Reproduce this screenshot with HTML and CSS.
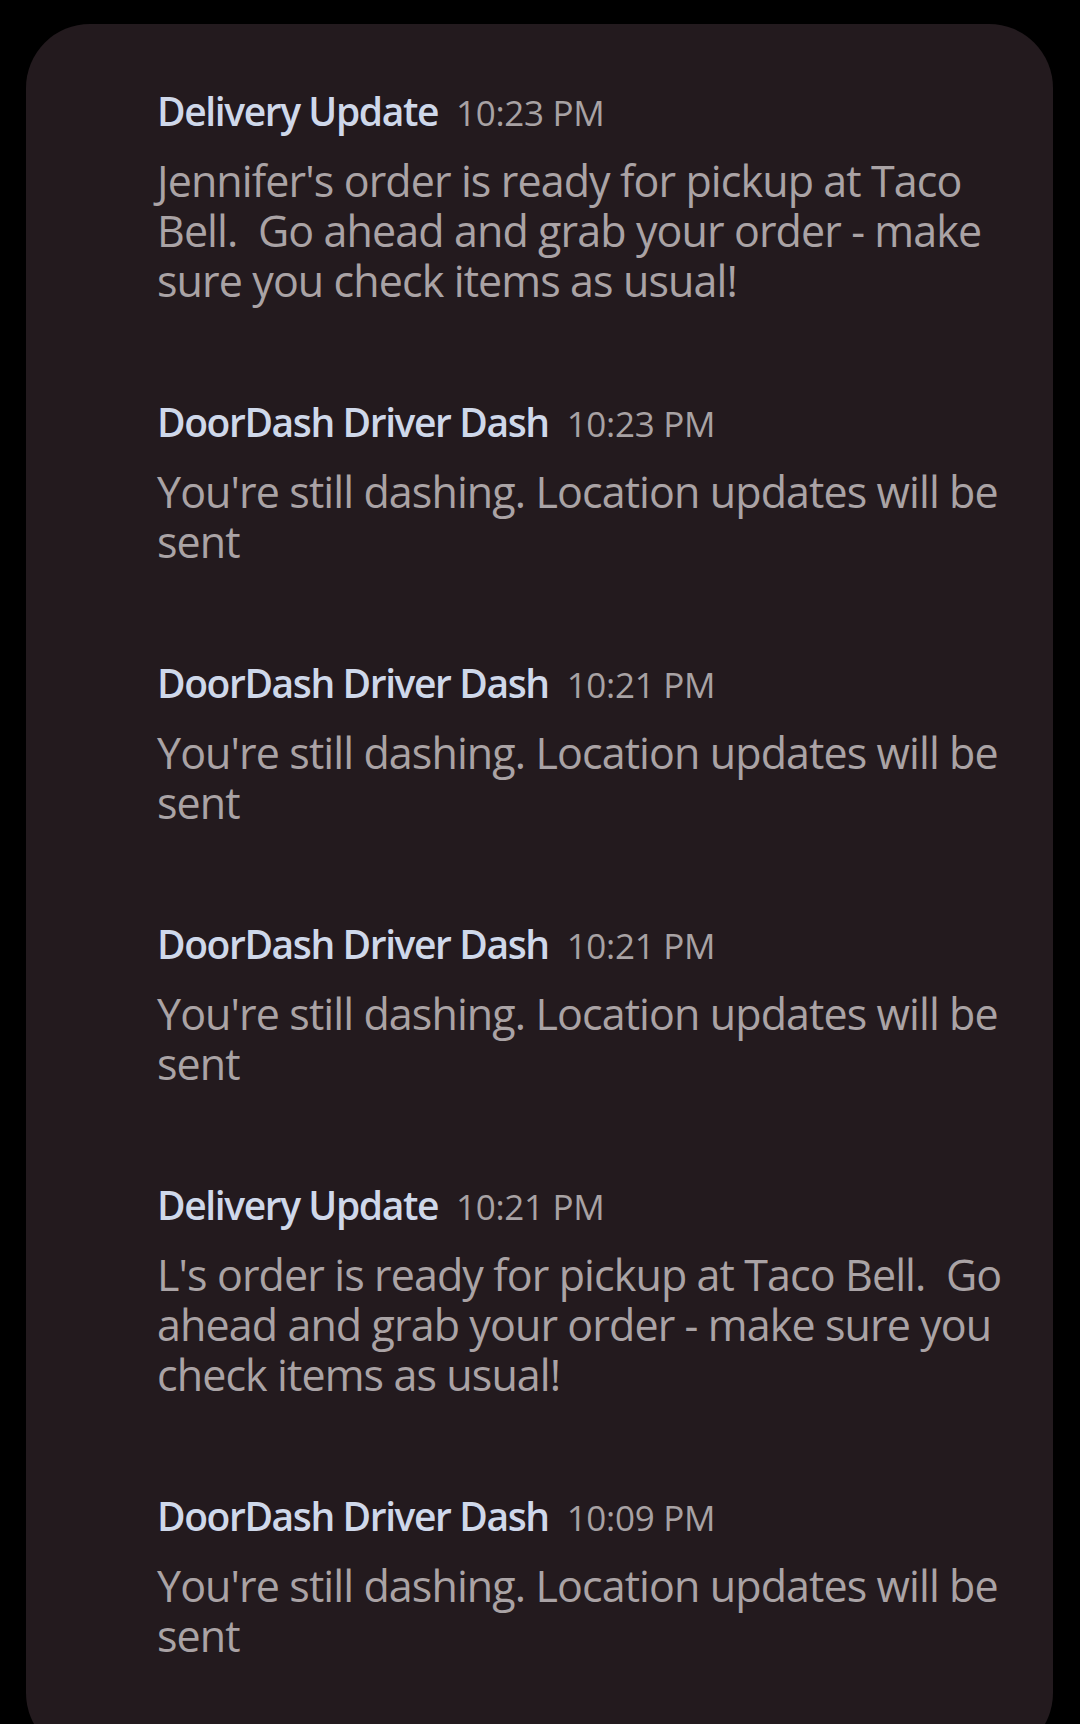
FILE: index.html
```html
<!DOCTYPE html>
<html lang="en">
<head>
<meta charset="utf-8">
<title>Notifications</title>
<link rel="stylesheet" href="styles.css">
</head>
<body>
<div class="panel">
  <div class="item">
    <div class="head"><span class="app">Delivery Update</span><span class="time">10:23 PM</span></div>
    <div class="msg">Jennifer's order is ready for pickup at Taco<br>Bell.&nbsp; Go ahead and grab your order - make<br>sure you check items as usual!</div>
  </div>
  <div class="item">
    <div class="head"><span class="app">DoorDash Driver Dash</span><span class="time">10:23 PM</span></div>
    <div class="msg">You're still dashing. Location updates will be<br>sent</div>
  </div>
  <div class="item">
    <div class="head"><span class="app">DoorDash Driver Dash</span><span class="time">10:21 PM</span></div>
    <div class="msg">You're still dashing. Location updates will be<br>sent</div>
  </div>
  <div class="item">
    <div class="head"><span class="app">DoorDash Driver Dash</span><span class="time">10:21 PM</span></div>
    <div class="msg">You're still dashing. Location updates will be<br>sent</div>
  </div>
  <div class="item">
    <div class="head"><span class="app">Delivery Update</span><span class="time">10:21 PM</span></div>
    <div class="msg">L's order is ready for pickup at Taco Bell.&nbsp; Go<br>ahead and grab your order - make sure you<br>check items as usual!</div>
  </div>
  <div class="item">
    <div class="head"><span class="app">DoorDash Driver Dash</span><span class="time">10:09 PM</span></div>
    <div class="msg">You're still dashing. Location updates will be<br>sent</div>
  </div>
</div>
</body>
</html>
```

FILE: styles.css
```css
html, body {
  margin: 0;
  padding: 0;
  background: #000;
}
body {
  width: 1080px;
  height: 1724px;
  overflow: hidden;
  font-family: "Open Sans", "Noto Sans", sans-serif;
}
.panel {
  box-sizing: border-box;
  margin: 24px 0 0 26px;
  width: 1027px;
  height: 1733px;
  border-radius: 64px;
  background: #231a1e;
  padding: 62px 20px 0 131px;
}
.item {
  margin-bottom: 91px;
}
.head {
  display: flex;
  align-items: baseline;
  gap: 18px;
  height: 50px;
  line-height: 50px;
  white-space: nowrap;
}
.app {
  font-size: 39px;
  font-weight: 600;
  letter-spacing: -1.4px;
  color: #cfd8ea;
}
.time {
  font-size: 35px;
  font-weight: 400;
  letter-spacing: -0.3px;
  color: #a8a2a4;
}
.msg {
  margin-top: 20px;
  font-size: 43px;
  line-height: 50px;
  letter-spacing: -0.9px;
  color: #aaa3a5;
  white-space: nowrap;
}
```
